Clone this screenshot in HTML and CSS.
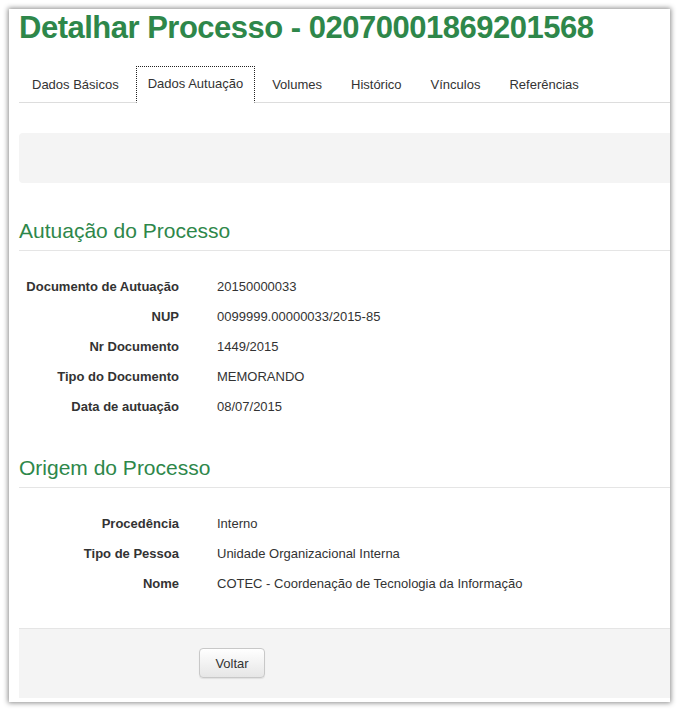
FILE: index.html
```html
<!DOCTYPE html>
<html lang="pt-BR">
<head>
<meta charset="utf-8">
<title>Detalhar Processo</title>
<link rel="stylesheet" href="styles.css">
</head>
<body>
<div class="panel">
  <h1 class="title">Detalhar Processo - 02070001869201568</h1>
  <ul class="tabs">
    <li class="tab">Dados Básicos</li>
    <li class="tab active">Dados Autuação</li>
    <li class="tab">Volumes</li>
    <li class="tab">Histórico</li>
    <li class="tab">Vínculos</li>
    <li class="tab">Referências</li>
  </ul>
  <div class="band"></div>

  <h2 class="section">Autuação do Processo</h2>
  <dl class="fields">
    <div class="row"><dt>Documento de Autuação</dt><dd>20150000033</dd></div>
    <div class="row"><dt>NUP</dt><dd>0099999.00000033/2015-85</dd></div>
    <div class="row"><dt>Nr Documento</dt><dd>1449/2015</dd></div>
    <div class="row"><dt>Tipo do Documento</dt><dd>MEMORANDO</dd></div>
    <div class="row"><dt>Data de autuação</dt><dd>08/07/2015</dd></div>
  </dl>

  <h2 class="section second">Origem do Processo</h2>
  <dl class="fields">
    <div class="row"><dt>Procedência</dt><dd>Interno</dd></div>
    <div class="row"><dt>Tipo de Pessoa</dt><dd>Unidade Organizacional Interna</dd></div>
    <div class="row"><dt>Nome</dt><dd>COTEC - Coordenação de Tecnologia da Informação</dd></div>
  </dl>

  <div class="actions">
    <button class="btn" type="button">Voltar</button>
  </div>
</div>
</body>
</html>
```
FILE: styles.css
```css
html, body {
  margin: 0;
  padding: 0;
  background: #ffffff;
}
body {
  font-family: "Liberation Sans", Arial, sans-serif;
  font-size: 13px;
  color: #333333;
  padding: 9px 8px 8px 9px;
}
.panel {
  width: 651px;
  height: 693px;
  padding-left: 10px;
  background: #ffffff;
  box-shadow: 0 0 5px 1px rgba(0, 0, 0, 0.45);
  overflow: hidden;
}
.title {
  margin: 0;
  padding-top: 1px;
  font-size: 31px;
  letter-spacing: -0.5px;
  line-height: 36px;
  font-weight: bold;
  color: #2e874a;
}
.tabs {
  list-style: none;
  margin: 20px 0 0;
  padding: 0 0 0 1px;
  display: flex;
  border-bottom: 1px solid #dddddd;
  height: 36px;
}
.tab {
  padding: 1px 12px 0;
  margin-right: 5px;
  line-height: 35px;
  height: 36px;
  color: #333333;
  box-sizing: border-box;
  white-space: nowrap;
}
.tab.active {
  border: 1px dotted #222222;
  border-bottom: 1px solid #ffffff;
  line-height: 34px;
  padding: 0 11px;
  height: 37px;
}
.band {
  margin-top: 30px;
  height: 50px;
  background: #f4f4f4;
  border-radius: 4px 0 0 4px;
}
.section {
  margin: 37px 0 0;
  font-size: 21px;
  line-height: 22px;
  font-weight: normal;
  color: #2e874a;
  padding-bottom: 8px;
  border-bottom: 1px solid #e5e5e5;
}
.section.second {
  margin-top: 36px;
}
.fields {
  margin: 20px 0 0;
  padding: 0;
}
.row {
  display: flex;
  height: 30px;
  align-items: center;
}
.row dt {
  width: 160px;
  text-align: right;
  font-weight: bold;
  color: #333333;
}
.row dd {
  margin: 0 0 0 38px;
}
.actions {
  margin-top: 30px;
  height: 70px;
  background: #f4f4f4;
  border-top: 1px solid #e5e5e5;
  padding-left: 180px;
  padding-top: 19px;
  box-sizing: border-box;
}
.btn {
  font-family: "Liberation Sans", Arial, sans-serif;
  font-size: 13px;
  color: #333333;
  width: 66px;
  height: 30px;
  border: 1px solid #c8c8c8;
  border-radius: 4px;
  background: linear-gradient(#ffffff, #e6e6e6);
  box-shadow: 0 1px 1px rgba(0, 0, 0, 0.08);
}
```
